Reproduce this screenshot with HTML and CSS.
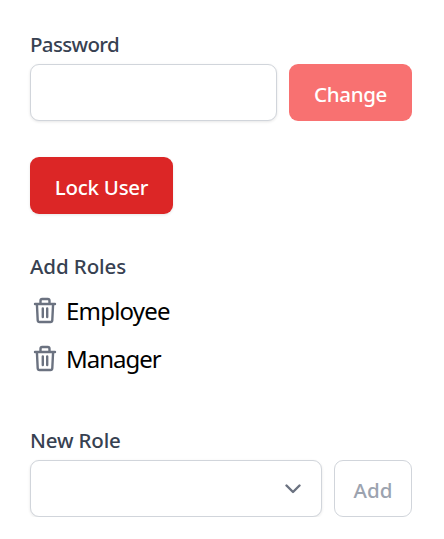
FILE: index.html
```html
<!DOCTYPE html>
<html lang="en">
<head>
<meta charset="utf-8">
<title>User</title>
<link rel="stylesheet" href="styles.css">
</head>
<body>
<main class="form">
  <section>
    <label class="label label-password" for="password">Password</label>
    <div class="row">
      <input class="field" id="password" type="password">
      <button class="button button-change" type="button">Change</button>
    </div>
  </section>
  <button class="button button-lock" type="button">Lock User</button>
  <section class="roles">
    <h2 class="label label-roles">Add Roles</h2>
    <ul class="role-list">
      <li class="role">
        <svg class="trash" viewBox="0 0 24 28"><path d="M2 8H22M7.5 8V4.7Q7.5 3 9.2 3H14.8Q16.5 3 16.5 4.7V8M3.9 8L4.7 24.2Q4.8 26 6.6 26H17.4Q19.2 26 19.3 24.2L20.1 8M9.8 12.5V21M14.2 12.5V21"/></svg>
        <span class="employee">Employee</span>
      </li>
      <li class="role">
        <svg class="trash" viewBox="0 0 24 28"><path d="M2 8H22M7.5 8V4.7Q7.5 3 9.2 3H14.8Q16.5 3 16.5 4.7V8M3.9 8L4.7 24.2Q4.8 26 6.6 26H17.4Q19.2 26 19.3 24.2L20.1 8M9.8 12.5V21M14.2 12.5V21"/></svg>
        <span class="manager">Manager</span>
      </li>
    </ul>
  </section>
  <section>
    <span class="label label-new">New Role</span>
    <div class="row">
      <div class="field select" role="combobox" aria-label="New Role">
        <svg class="chevron" viewBox="0 0 18 10"><path d="M2.5 1.5L9 8L15.5 1.5"/></svg>
      </div>
      <button class="button button-add" type="button">Add</button>
    </div>
  </section>
</main>
</body>
</html>
```

FILE: styles.css
```css
* { box-sizing: border-box; }
body {
  margin: 0;
  background: #fff;
  font-family: "Noto Sans", "Open Sans", sans-serif;
}
.form { padding: 30px 32px 0 30px; }
.label {
  display: block;
  height: 28px;
  margin: 0 0 6px;
  color: #374151;
  font-size: 20.5px;
  font-weight: 500;
  line-height: 28px;
}
.label-password { letter-spacing: -0.65px; }
.label-roles { letter-spacing: -0.1px; }
.label-new { letter-spacing: -0.15px; }
.row { display: flex; gap: 12px; }
.field {
  flex: 1;
  min-width: 0;
  height: 57px;
  border: 1px solid #d1d5db;
  border-radius: 9px;
  background: #fff;
  box-shadow: 0 1px 3px rgba(0, 0, 0, 0.1);
}
.button {
  display: block;
  height: 57px;
  padding: 2px 0 0;
  border: 0;
  border-radius: 9px;
  color: #fff;
  font: 500 20.5px/28px "Noto Sans", "Open Sans", sans-serif;
  letter-spacing: -0.25px;
  white-space: nowrap;
}
.button-change { width: 123px; background: #f87171; letter-spacing: -0.35px; }
.button-lock {
  width: 143px;
  margin-top: 36px;
  background: #dc2626;
  box-shadow: 0 1px 3px rgba(0, 0, 0, 0.1);
}
.button-add {
  width: 78px;
  border: 1px solid #d1d5db;
  background: #fff;
  color: #9ca3af;
  letter-spacing: 0;
}
.roles { margin-top: 38px; }
.label-roles { margin-bottom: 8px; }
.role-list { margin: 0; padding: 0; list-style: none; }
.role {
  display: flex;
  align-items: center;
  height: 48px;
  padding: 0 0 2px 3px;
  color: #000;
  font-size: 24px;
  font-weight: 400;
  line-height: 32px;
}
.employee { letter-spacing: -0.8px; }
.manager { letter-spacing: -1px; }
.trash {
  width: 24px;
  height: 28px;
  margin: 0 9px 3px 0;
  fill: none;
  stroke: #6b7280;
  stroke-width: 2.4;
  stroke-linecap: round;
  stroke-linejoin: round;
}
.label-new { margin-top: 42px; }
.select {
  display: flex;
  align-items: center;
  justify-content: flex-end;
  padding-right: 19px;
}
.chevron {
  width: 18px;
  height: 10px;
  fill: none;
  stroke: #6b7280;
  stroke-width: 2.4;
  stroke-linecap: round;
  stroke-linejoin: round;
}
```
